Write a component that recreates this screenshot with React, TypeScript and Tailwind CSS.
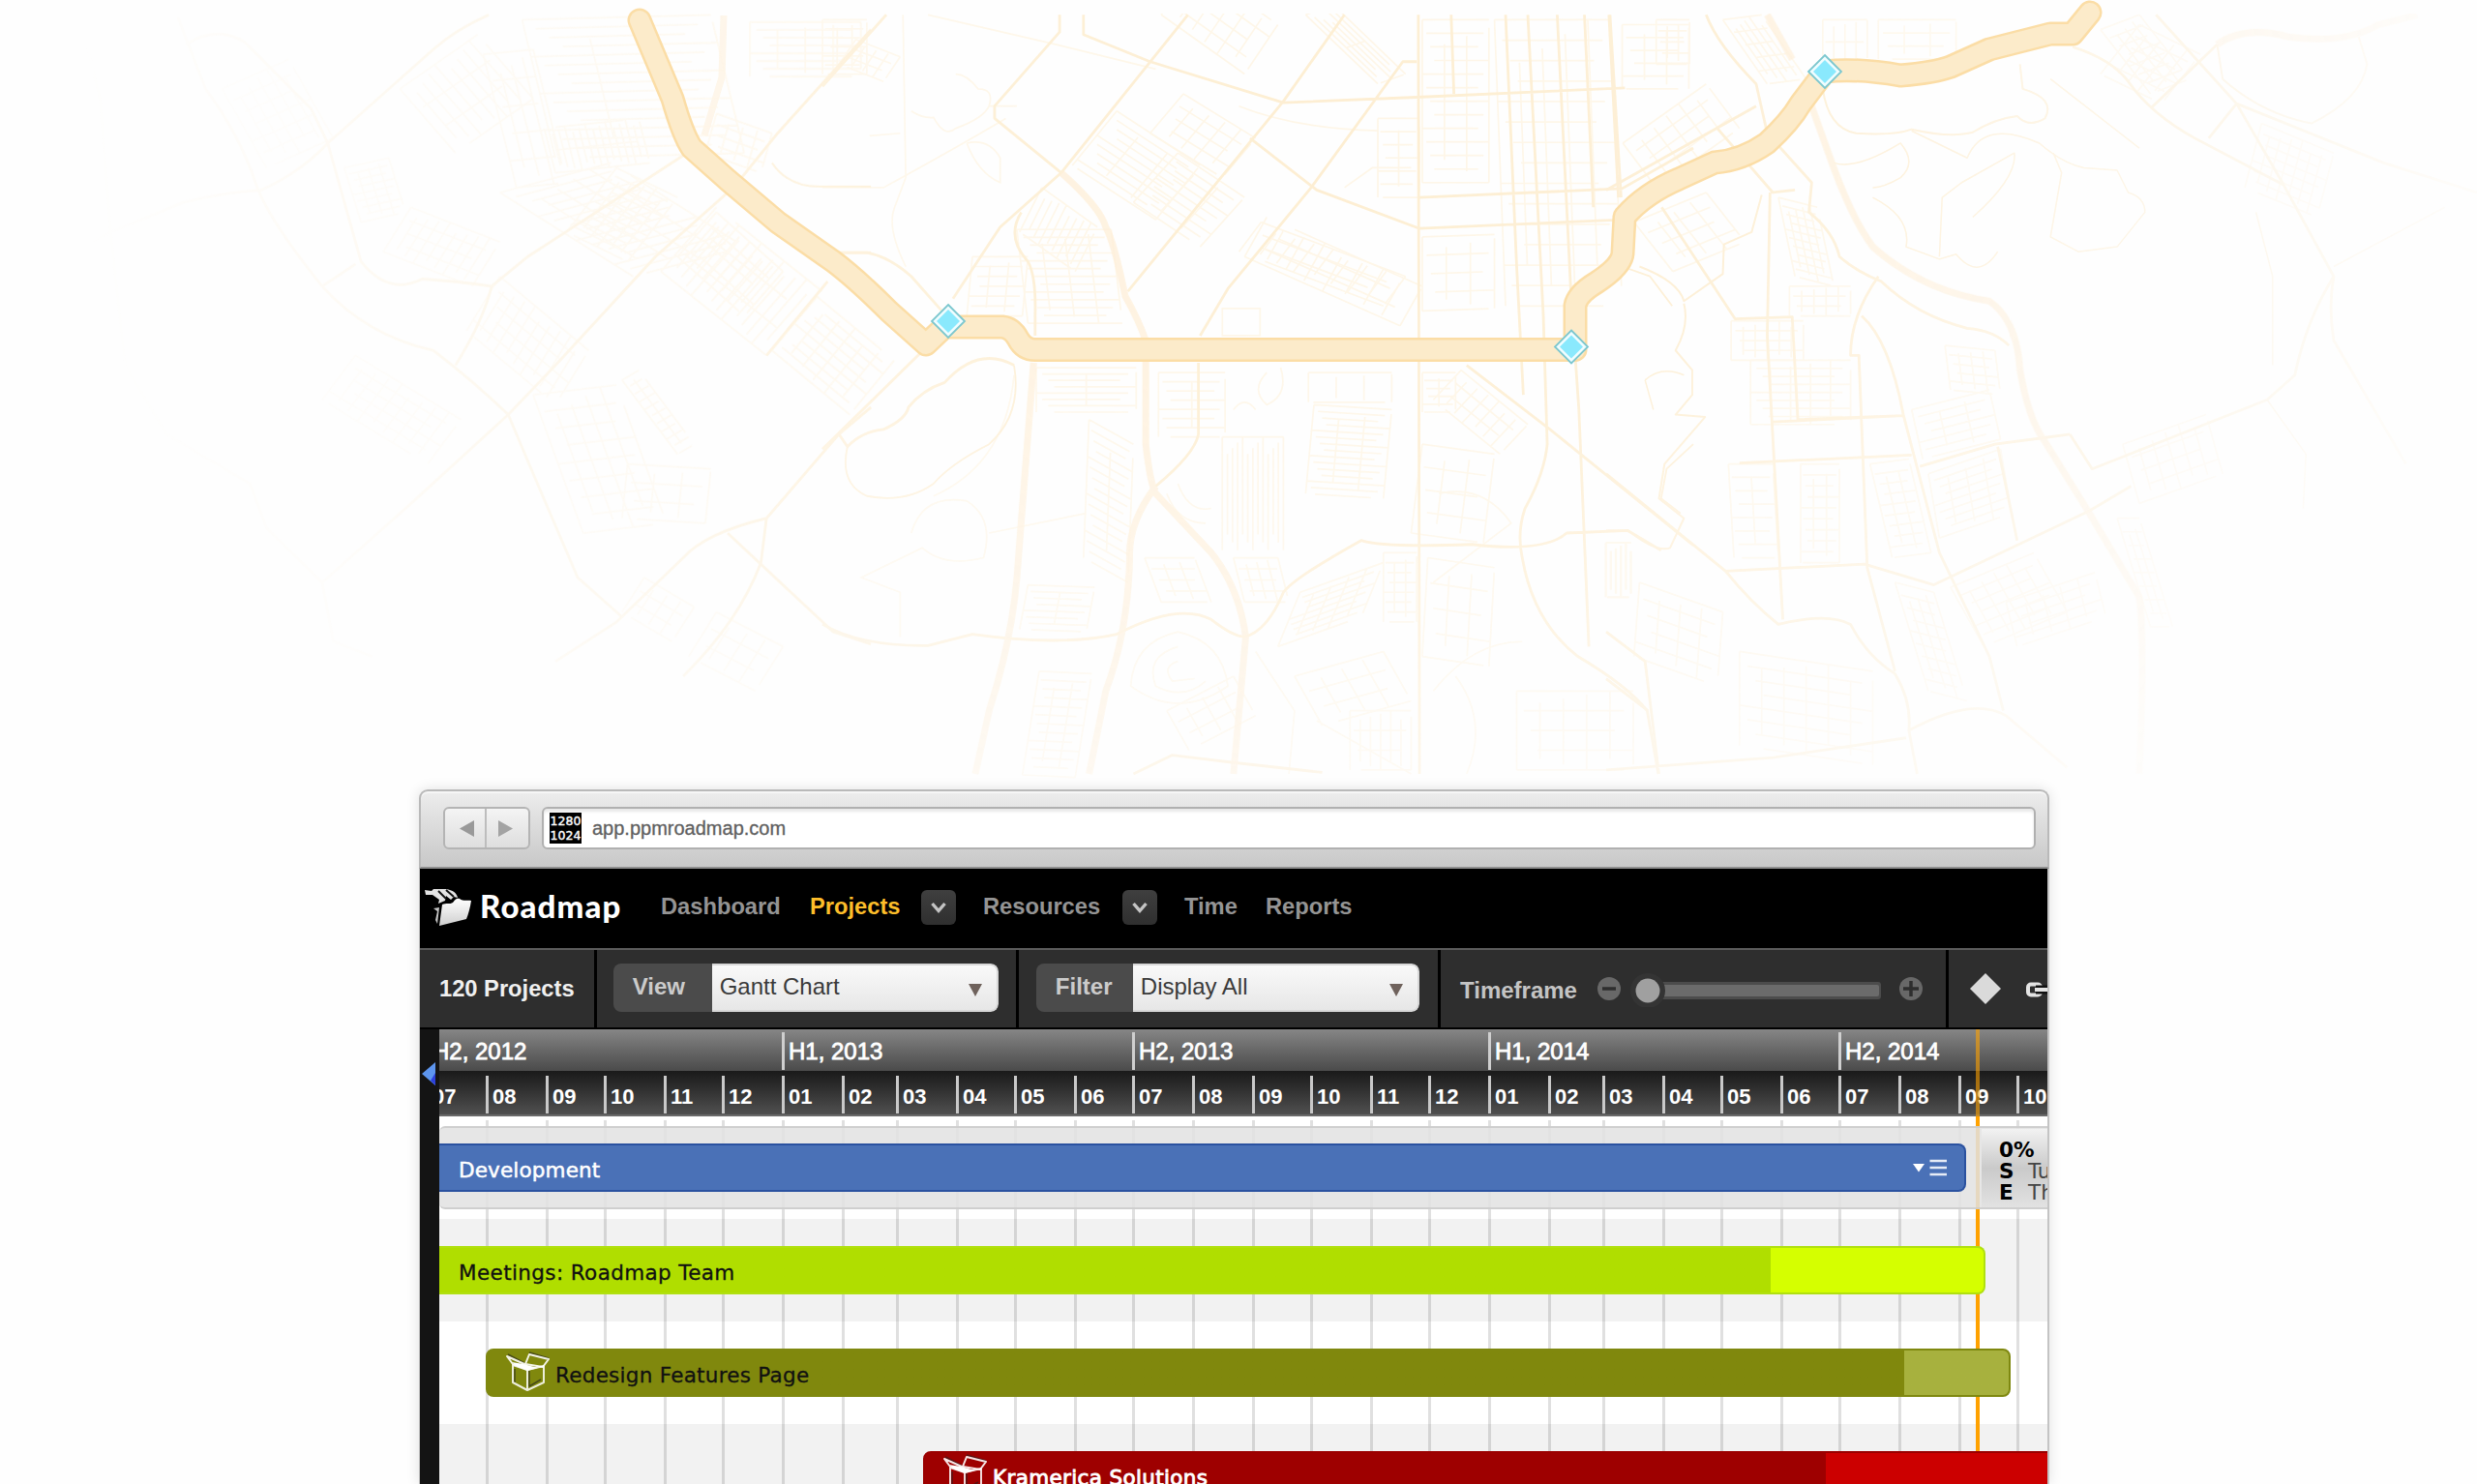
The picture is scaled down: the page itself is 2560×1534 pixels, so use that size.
import React from "react";

type Patch = [number, number, number, number, number, number, number, number];

// Builds a street grid inside the parallelogram spanned by u and v.
function streets([x, y, ux, uy, vx, vy, nu, nv]: Patch): string {
  let d = "";
  for (let i = 0; i <= nu; i++) {
    const t = nu ? i / nu : 0;
    const a = ((i * 7) % 4) * 0.05;
    const b = 1 - ((i * 5) % 3) * 0.07;
    d += `M${(x + ux * t + vx * a).toFixed(1)} ${(y + uy * t + vy * a).toFixed(1)}l${(vx * (b - a)).toFixed(1)} ${(vy * (b - a)).toFixed(1)}`;
  }
  for (let j = 0; j <= nv; j++) {
    const t = nv ? j / nv : 0;
    const a = ((j * 5) % 4) * 0.06;
    const b = 1 - ((j * 7) % 3) * 0.08;
    d += `M${(x + vx * t + ux * a).toFixed(1)} ${(y + vy * t + uy * a).toFixed(1)}l${(ux * (b - a)).toFixed(1)} ${(uy * (b - a)).toFixed(1)}`;
  }
  return d;
}

const westPatches: Patch[] = [
  [940, 40, 340, -10, 60, 280, 3, 15],
  [1350, 45, 200, 0, 0, 110, 4, 7],
  [720, 180, 140, -110, 100, 130, 9, 3],
  [870, 110, 90, -10, 60, 270, 4, 5],
  [1000, 350, 170, -20, -20, -90, 14, 2],
  [900, 390, 200, -60, 240, 170, 5, 14],
  [1110, 340, 110, 60, -90, 130, 6, 10],
  [1190, 550, 190, 170, 100, -130, 14, 3],
  [1290, 430, 120, 120, -70, 90, 8, 4],
  [1390, 710, 140, 130, 80, -110, 6, 8],
  [900, 560, 160, 150, -60, 110, 10, 5],
  [1290, 230, 100, 40, -20, 80, 4, 4],
  [400, 180, 120, -60, 80, 160, 6, 6],
  [620, 340, 80, -20, 30, 110, 4, 8],
  [740, 420, 160, 70, -50, 90, 9, 4],
  [640, 720, 190, 130, -60, 90, 9, 5],
  [960, 800, 150, -20, 90, 280, 5, 8],
  [1130, 940, 150, 10, -10, 110, 3, 3],
  [1120, 770, 100, 150, 30, -20, 10, 2],
  [1160, 1170, 90, 60, -40, 70, 4, 3],
  [1290, 1240, 120, 70, -50, 90, 4, 3],
];

const midPatches: Patch[] = [
  [0, 40, 80, 0, 0, 110, 3, 6],
  [60, 80, 80, 35, -30, 50, 4, 3],
  [530, 225, 150, 110, -80, 110, 3, 9],
  [640, 310, 120, 90, -80, 100, 3, 8],
  [610, 30, 150, 120, 60, -100, 6, 4],
  [650, 190, 130, 90, -60, 80, 5, 4],
  [870, 30, 130, 140, 50, -20, 2, 6],
  [790, 450, 260, 110, -40, 60, 8, 3],
  [760, 520, 280, 140, 40, -80, 8, 3],
  [395, 380, 100, 80, -40, 90, 9, 1],
  [350, 465, 170, 0, 20, 190, 4, 12],
  [270, 520, 100, 0, -10, 120, 3, 6],
  [1080, 40, 120, 0, 0, 330, 3, 12],
  [1210, 40, 210, 0, 20, 580, 5, 14],
  [1000, 240, 75, 0, 0, 160, 2, 6],
  [1440, 50, 120, 0, 0, 130, 3, 5],
  [1080, 480, 130, -5, 0, 150, 3, 4],
  [385, 745, 180, 0, 0, 90, 2, 7],
  [480, 850, 80, 50, -10, 280, 2, 15],
  [605, 755, 120, 0, 0, 130, 2, 7],
  [720, 885, 110, 0, 0, 230, 12, 0],
  [885, 820, 140, 10, -15, 180, 3, 14],
  [875, 755, 150, 0, 0, 60, 3, 1],
  [370, 1185, 120, 5, -15, 90, 2, 7],
  [390, 1360, 95, 5, -30, 210, 3, 12],
  [580, 1130, 90, 0, 30, 90, 3, 4],
  [740, 1130, 80, 0, 20, 90, 4, 4],
  [860, 1200, 150, -60, -40, 110, 5, 8],
  [1010, 1120, 60, 0, 0, 140, 3, 7],
  [1080, 755, 60, 0, 0, 80, 2, 5],
  [1150, 750, 120, 110, -50, 60, 7, 3],
  [850, 1370, 160, -50, 50, 100, 4, 3],
  [950, 1440, 110, 0, 0, 120, 6, 3],
  [1090, 1130, 120, 20, -10, 200, 3, 4],
  [1080, 900, 130, 20, -20, 180, 3, 4],
  [1410, 1100, 45, 0, 0, 110, 5, 1],
  [1250, 1400, 210, 0, 0, 160, 5, 4],
  [620, 1440, 120, -70, 40, 80, 4, 3],
];

const eastPatches: Patch[] = [
  [30, 290, 150, -120, 60, 90, 6, 4],
  [90, 40, 60, 0, 0, 90, 3, 4],
  [210, 40, 70, -10, 80, 130, 6, 5],
  [50, 450, 130, -60, 70, 100, 4, 4],
  [390, 40, 80, 0, 0, 90, 4, 2],
  [490, 40, 140, 0, 0, 80, 3, 3],
  [890, 60, 70, -30, 90, 130, 4, 7],
  [960, 50, 110, 60, -70, 100, 5, 5],
  [310, 400, 70, 20, 30, 160, 5, 10],
  [330, 580, 110, 0, 0, 60, 5, 3],
  [225, 650, 130, 0, 0, 80, 6, 4],
  [260, 730, 180, 0, 0, 130, 5, 8],
  [350, 940, 70, 0, 0, 200, 3, 9],
  [220, 940, 80, 0, 10, 190, 2, 7],
  [475, 940, 70, -10, 40, 190, 3, 9],
  [550, 830, 140, -40, 20, 100, 3, 6],
  [580, 960, 130, -50, 20, 130, 4, 8],
  [610, 700, 90, 10, 10, 90, 4, 5],
  [620, 1190, 150, -70, 60, 120, 6, 6],
  [520, 1180, 70, 20, 60, 220, 4, 9],
  [720, 1220, 160, -60, 20, 90, 5, 5],
  [240, 1320, 240, 40, 0, 190, 6, 7],
  [60, 1180, 150, 60, -10, 150, 4, 5],
  [930, 900, 150, -60, 30, 120, 6, 4],
  [1180, 250, 130, 60, -30, 130, 7, 7],
  [920, 1050, 40, 0, 60, 220, 3, 8],
  [0, 1100, 45, 0, 0, 110, 5, 1],
];

const ROUTE =
  "M661 21L695 102Q706 140 715 153L752 186L804 230L861 270Q885 288 919 322L957 356L976 338H1036Q1046 339 1052 350Q1058 361.500 1070 361.500H1628V316Q1630 304 1650 292Q1676 275 1677 262L1679 224Q1700 200 1735 185L1772 168Q1800 166 1826 148Q1850 126 1861 107L1886 74Q1918 70 1964 78Q2000 75 2016 69L2056 51L2119 35H2142L2160 13";

function RoadMap() {
  return (
    <svg className="absolute left-0 top-0 h-[820px] w-[2560px]" viewBox="0 0 2560 820" fill="none">
      <defs>
        <radialGradient id="fade" gradientUnits="userSpaceOnUse" cx="0" cy="0" r="1" gradientTransform="translate(1400 140) scale(1320 1020)">
          <stop offset="0" stopColor="#fff" />
          <stop offset="0.3" stopColor="#fff" stopOpacity="0.88" />
          <stop offset="0.62" stopColor="#fff" stopOpacity="0.48" />
          <stop offset="0.85" stopColor="#fff" stopOpacity="0.14" />
          <stop offset="1" stopColor="#fff" stopOpacity="0" />
        </radialGradient>
        <mask id="edge" maskUnits="userSpaceOnUse" x="0" y="0" width="2560" height="820">
          <rect x="0" y="14" width="2560" height="806" fill="url(#fade)" />
        </mask>
      </defs>
      <g mask="url(#edge)">
        <g stroke="#fef6e7" strokeWidth="1.700">
          <g transform="scale(0.574 0.5102)">
            {westPatches.map((p, i) => (
              <path key={i} d={streets(p)} vectorEffect="non-scaling-stroke" />
            ))}
          </g>
          <g transform="translate(850 0) scale(0.574 0.5102)">
            {midPatches.map((p, i) => (
              <path key={i} d={streets(p)} vectorEffect="non-scaling-stroke" />
            ))}
            <path vectorEffect="non-scaling-stroke" d="M145 30L150 360L130 420Q115 460 150 540M190 30L420 90L600 140M160 225Q180 240 200 238Q220 280 240 260Q290 240 300 215Q350 215 350 215M300 215Q310 180 280 180Q260 150 240 150M85 275L140 270M0 380H110Q240 300 330 240M260 290Q300 280 320 320V370Q280 350 260 290M720 625H788V680H720ZM800 755Q770 790 800 820Q840 800 825 745M740 830Q760 800 780 830M300 1080L475 1040M160 1080Q180 1000 260 1015Q310 1050 290 1130Q220 1150 180 1110L70 1170L140 1200V1290M640 1280Q560 1300 555 1390Q640 1460 730 1390Q720 1300 640 1280M640 1310Q580 1330 600 1390Q650 1420 690 1380M640 1340Q610 1350 630 1380L670 1375M620 1000Q640 1060 690 1060M640 980Q660 1040 700 1030M200 1005Q330 940 345 760M1110 1000Q1190 980 1240 1060L1100 1180M1100 1400Q1170 1300 1260 1300M1140 1370Q1200 1460 1160 1568M780 1320L850 1440L840 1568M890 1460L1060 1568M940 380L990 340H1060M750 215Q850 260 1000 265" />
          </g>
          <g transform="translate(1660 0) scale(0.574 0.5102)">
            {eastPatches.map((p, i) => (
              <path key={i} d={streets(p)} vectorEffect="non-scaling-stroke" />
            ))}
          </g>
        </g>
        <g stroke="#fdeed2" strokeWidth="2.800" strokeLinejoin="round">
          <g transform="scale(0.574 0.5102)">
            <path vectorEffect="non-scaling-stroke" d="M880 30Q820 60 780 100L590 290Q540 350 470 385Q400 390 330 410L200 470L90 530M320 35L370 180Q430 270 460 370Q480 440 580 580Q660 680 780 710Q850 770 915 840L960 960L1040 1170L1120 1250M335 90Q390 50 440 85L560 220L590 290L650 530Q700 600 760 565Q830 570 885 580L950 520L1230 315M885 580Q870 650 820 740M1310 390L1180 520L1000 740L915 840L740 1020L580 1180L600 1300L670 1330M580 580L640 535M1568 60L1400 270L1335 360M1500 512H1568M1568 825L1510 880L1380 1050Q1270 1080 1230 1130L1110 1260L1000 1340M1380 1050L1370 1140Q1330 1260 1230 1370M1310 1080L1500 1280L1568 1305M1490 570L1380 720M150 60L180 200L200 480L225 740L300 880L450 980L480 1070L580 1180" />
            <path strokeWidth="2" vectorEffect="non-scaling-stroke" d="M1390 330Q1420 380 1480 378H1568" />
          </g>
          <g transform="translate(850 0) scale(0.574 0.5102)">
            <path vectorEffect="non-scaling-stroke" d="M115 30L0 175M427 30V65L310 215V240L430 350M470 30V70L590 125L830 208L1070 197L1445 178M658 30L430 350L320 460L235 605M940 30L830 205L550 590M1070 125H1045L880 380L730 585L680 680M770 280L890 385L1075 463L1440 445M1075 400L1440 382L1568 300M1073 30L1075 1568M1132 30L1137 190M1230 30L1250 540L1262 800M1270 30L1298 640L1305 900Q1300 960 1265 1030Q1250 1080 1260 1130Q1280 1260 1360 1330Q1450 1390 1485 1440L1505 1568M1323 30L1348 600L1362 830L1380 1310M1372 30L1388 420M1418 30L1438 400M30 512H80Q120 520 160 560L215 630M358 430Q330 480 370 530Q385 560 383 640V680M30 880L45 905Q70 875 110 870Q150 850 155 825Q180 790 220 775Q280 700 345 740M0 910L190 700M0 1265Q70 1310 190 1308L270 1285Q430 1310 530 1285Q640 1220 700 1255Q740 1290 760 1290Q800 1280 830 1200Q850 1170 970 1095Q1010 1110 1170 1103Q1300 1120 1340 1080L1450 1075L1510 1115M1160 740L1310 870L1568 1105M677 735V880Q670 920 600 985M560 1568L630 1530L740 1545L900 1565" />
            <path strokeWidth="1.800" vectorEffect="non-scaling-stroke" d="M345 740Q360 840 300 900Q230 940 200 980Q150 1020 80 1005Q30 980 45 905M1440 540L1490 560L1530 620M1568 900L1520 950L1510 1010L1545 1040" />
          </g>
          <g transform="translate(1660 0) scale(0.574 0.5102)">
            <path vectorEffect="non-scaling-stroke" d="M5 30L22 400M180 30Q200 90 270 170L290 270L370 370L365 430Q410 470 420 520Q450 550 495 570Q560 640 650 665Q700 670 725 700M0 385L270 215M200 260L300 390L340 385M295 390L290 680L318 1255M100 420L232 646L335 642L345 850L535 842M490 560Q440 640 440 720L455 720L470 1150L520 1360M460 640Q510 690 535 840L600 1120L690 1330L715 1440M300 855L535 842M240 938L550 922M565 945L700 900L835 880M705 905L740 1095M215 1157L465 1143L590 1185L870 1035L945 985M0 960L215 1157Q260 1220 310 1265Q400 1240 440 1265Q470 1330 520 1365Q550 1420 545 1480L560 1568M0 1560L300 1535L540 1495M0 1280L70 1340L95 1568M0 1375L75 1440M840 95Q910 120 940 165Q980 230 1060 280L1220 375L1310 560Q1300 620 1310 690L1440 940M980 220L1100 90M990 30L1135 210L1085 280M1135 210L1400 330L1568 390M1135 210L1220 375M1310 560Q1260 650 1240 760L1190 810L875 950L835 880M545 1480Q660 1410 720 1450L830 1555" />
            <path strokeWidth="2" vectorEffect="non-scaling-stroke" d="M280 395L262 470L212 495L210 555L140 610Q130 570 60 540M140 615Q150 660 125 710L155 750V800L125 840L178 845L105 940L95 1010L140 1050L115 1110Q90 1120 40 1075L0 1075M390 180Q400 260 450 270Q520 275 550 262Q620 280 660 268Q700 240 740 235Q760 260 790 240Q810 200 750 180L745 130M1100 90L1110 160Q1180 230 1270 250Q1360 200 1370 130L1355 75" />
            <path strokeWidth="1.500" vectorEffect="non-scaling-stroke" d="M410 330Q450 345 530 290Q560 330 530 360Q500 380 480 380M550 265L650 320Q680 240 780 290Q820 330 860 340L920 345L940 390Q970 400 970 430L920 500L850 510L800 480L820 350L805 310M600 520L605 400L640 370L735 310Q740 360 660 440M480 400Q550 440 540 500L600 525L630 515Q670 570 705 510M800 160L960 300M1510 420L1310 540M1190 810L1260 920L1255 1030M1170 430L1200 560L1200 740M70 770Q100 740 140 760M70 770L85 830" />
          </g>
        </g>
        <g stroke="#feeed6" strokeWidth="7" strokeLinejoin="round" opacity="0.8">
          <g transform="translate(850 0) scale(0.574 0.5102)">
            <path vectorEffect="non-scaling-stroke" d="M430 350Q500 420 510 460Q525 490 545 600Q570 650 582 690V900Q590 980 600 1000L700 1120Q750 1190 762 1290L740 1568M600 985Q550 1060 553 1130Q550 1280 510 1400L480 1568M380 735L350 1170Q340 1300 300 1440L275 1568" />
          </g>
          <g transform="translate(1660 0) scale(0.574 0.5102)">
            <path vectorEffect="non-scaling-stroke" d="M365 200L400 310Q440 440 480 500Q570 590 690 610Q740 650 745 750Q760 850 790 895L870 1040L960 1210Q970 1300 960 1568M290 30L335 120M1100 90Q1150 50 1230 75Q1330 90 1390 50L1460 30" />
          </g>
          <path d="M748 16L746 80L728 140" />
        </g>
      </g>
      <g strokeLinecap="round" strokeLinejoin="round">
        <path stroke="#fbdda6" strokeWidth="25" d={ROUTE} />
        <path stroke="#fcebca" strokeWidth="20" d={ROUTE} />
      </g>
      {[
        [980, 332],
        [1624, 358.5],
        [1886, 74],
      ].map(([x, y]) => (
        <g key={x} transform={`translate(${x} ${y})`}>
          <path d="M0-17L17 0L0 17L-17 0Z" fill="#f0fdff" stroke="#7cc7cf" strokeWidth="1.800" />
          <path d="M0-12L12 0L0 12L-12 0Z" fill="#8ae9fd" />
        </g>
      ))}
    </svg>
  );
}

function BoxIcon() {
  return (
    <svg className="h-[44px] w-[46px] shrink-0" viewBox="0 0 46 44" fill="none" strokeLinejoin="round">
      <g stroke="#222" strokeOpacity=".6" strokeWidth="1.500">
        <path d="M2 3L19 12M24 1L44 7M9 18V32M24 20V36L36 29" />
      </g>
      <path d="M7 14L22 19L39 15V32L22 40L7 32ZM22 18V40" stroke="#fff" strokeWidth="2" strokeOpacity=".85" />
      <path d="M1 5L19 13L22 18L7 13ZM24 3L44 8L38 16L20 13Z" stroke="#fff" strokeWidth="2" strokeOpacity=".9" />
      <path d="M6 11L18 13L33 17L22 20L12 16Z" fill="#fff" />
    </svg>
  );
}

function MenuToggle() {
  return (
    <div className="flex h-[36px] w-[36px] items-center justify-center rounded-[6px] bg-linear-to-b from-[#3f3f3f] to-[#2f2f2f]">
      <svg className="h-[14px] w-[18px]" viewBox="0 0 18 14" fill="none">
        <path d="M2.500 3L9 10.500L15.500 3" stroke="#c4c4c4" strokeWidth="3.400" />
      </svg>
    </div>
  );
}

function Picker({ label, value, labelWidth }: { label: string; value: string; labelWidth: string }) {
  return (
    <div className="flex h-[50px] overflow-hidden rounded-[8px]">
      <div className={`${labelWidth} flex items-center bg-[#4b4b4b] pb-[2px] pl-[20px] text-[24px] font-bold text-[#cbcbcb]`}>{label}</div>
      <div className="flex w-[296px] items-center justify-between border-y-2 border-r-2 border-[#d8d8d8] rounded-r-[8px] bg-linear-to-b from-[#f9f9f9] to-[#e7e7e7] pl-[8px] pr-[15px]">
        <span className="pb-[2px] text-[24px] text-[#3a3a3a]">{value}</span>
        <svg className="mt-[5px] h-[13px] w-[14px]" viewBox="0 0 14 13">
          <path d="M0 0H14L7 13Z" fill="#6f625c" />
        </svg>
      </div>
    </div>
  );
}

const months: [string, number][] = [
  ["07", 62], ["08", 62], ["09", 60], ["10", 62], ["11", 60], ["12", 62],
  ["01", 62], ["02", 56], ["03", 62], ["04", 60], ["05", 62], ["06", 60],
  ["07", 62], ["08", 62], ["09", 60], ["10", 62], ["11", 60], ["12", 62],
  ["01", 62], ["02", 56], ["03", 62], ["04", 60], ["05", 62], ["06", 60],
  ["07", 62], ["08", 62], ["09", 60], ["10", 62],
];

const halves: [string, number][] = [
  ["H2, 2012", 368],
  ["H1, 2013", 362],
  ["H2, 2013", 368],
  ["H1, 2014", 362],
  ["H2, 2014", 368],
];

function Chrome() {
  return (
    <div className="flex h-[82px] rounded-t-[9px] border-x-2 border-t-2 border-b-2 border-[#b9b9b9] border-b-[#8f8f8f] bg-linear-to-b from-[#ededed] to-[#c8c8c8] pl-[23px] pt-[16px] shadow-[inset_0_2px_0_#f6f6f6]">
      <div className="flex h-[44px] w-[90px] rounded-[6px] border-2 border-[#b4b4b4] bg-linear-to-b from-[#f4f4f4] to-[#dedede]">
        <div className="flex w-[43px] items-center justify-end border-r-2 border-[#bdbdbd] pr-[11px]">
          <svg className="h-[17px] w-[15px]" viewBox="0 0 15 17"><path d="M15 0V17L0 8.500Z" fill="#999" /></svg>
        </div>
        <div className="flex flex-1 items-center pl-[12px]">
          <svg className="h-[17px] w-[15px]" viewBox="0 0 15 17"><path d="M0 0V17L15 8.500Z" fill="#a3a3a3" /></svg>
        </div>
      </div>
      <div className="ml-[12px] flex h-[44px] w-[1544px] items-center rounded-[6px] border-2 border-[#b0b0b0] bg-white pl-[6px] shadow-[inset_0_3px_3px_#e8e8e8]">
        <div className="flex h-[32px] w-[33px] flex-col items-center justify-center bg-black font-['DejaVu_Sans'] text-[12.500px] leading-[15.500px] text-white [-webkit-text-stroke:0.4px_white]">
          <span>1280</span>
          <span>1024</span>
        </div>
        <span className="ml-[11px] pb-px text-[20px] text-[#606060] [-webkit-text-stroke:0.3px_#606060]">app.ppmroadmap.com</span>
      </div>
    </div>
  );
}

function Nav() {
  return (
    <div className="flex h-[82px] items-center bg-black pb-[3px] pl-[5px] text-[23.700px] font-bold text-[#949494]">
      <svg className="h-[40px] w-[50px]" viewBox="0 0 50 40">
        <defs>
          <linearGradient id="folder" x1="0" y1="0" x2="0" y2="1">
            <stop offset="0" stopColor="#fff" />
            <stop offset="1" stopColor="#cfcfcf" />
          </linearGradient>
        </defs>
        <path d="M0 2L7 3L9 1H22C29 2 33 5 34 10L30 9L27 12L22 8L21 13L14 16L15 12L8 7L1 7Z" fill="#e4e4e4" />
        <path d="M14 3L22 11M22 2L30 9" stroke="#111" strokeWidth="2" />
        <path d="M9 21L15 20L13 37L11 33L13 24Z" fill="#c4c4c4" />
        <path d="M18 17C22 15 26 17 29 15C31 13 32 10 36 11C40 14 44 12 48 13C47 20 45 27 43 32L15 39Z" fill="url(#folder)" />
      </svg>
      <span className="ml-[7px] w-[187px] pb-[2px] font-['Lato'] text-[33px] font-black leading-none tracking-[1.1px] text-white">Roadmap</span>
      <span className="w-[154px] pt-px">Dashboard</span>
      <span className="w-[115px] pt-px text-[#fdbe2a]">Projects</span>
      <MenuToggle />
      <span className="ml-[28px] w-[144px] pt-px">Resources</span>
      <MenuToggle />
      <span className="ml-[28px] w-[84px] pt-px">Time</span>
      <span className="pt-px">Reports</span>
    </div>
  );
}

function Toolbar() {
  return (
    <div className="flex h-[84px] border-b-2 border-t-2 border-b-black border-t-[#5b5b5b] bg-[#2e2e2e]">
      <div className="flex w-[183px] items-center border-r-[3px] border-black pl-[20px] pt-[2px] text-[23.700px] font-bold text-[#f0f0f0]">120 Projects</div>
      <div className="flex w-[437px] items-center border-r-[3px] border-black pb-[2px] pl-[17px]">
        <Picker label="View" value="Gantt Chart" labelWidth="w-[102px]" />
      </div>
      <div className="flex w-[437px] items-center border-r-[3px] border-black pb-[2px] pl-[18px]">
        <Picker label="Filter" value="Display All" labelWidth="w-[100px]" />
      </div>
      <div className="flex w-[526px] items-center border-r-[3px] border-black pl-[20px] pt-[2px]">
        <span className="w-[142px] pt-[2px] text-[24px] font-bold text-[#c4c4c4]">Timeframe</span>
        <svg className="h-[36px] w-[340px]" viewBox="0 0 340 36">
          <circle cx="12" cy="17" r="12" fill="#686868" />
          <path d="M5 17H19" stroke="#2e2e2e" strokeWidth="3.500" />
          <rect x="46" y="10" width="247" height="18" rx="3" fill="#4c4c4c" />
          <rect x="46" y="13" width="245" height="12" rx="2" fill="#6b6b6b" />
          <circle cx="52" cy="19" r="18" fill="#343434" />
          <circle cx="52" cy="19" r="12.500" fill="#a0a0a0" />
          <circle cx="324" cy="17" r="12" fill="#686868" />
          <path d="M316 17H332M324 9V25" stroke="#2e2e2e" strokeWidth="3.500" />
        </svg>
      </div>
      <div className="flex items-center pl-[22px]">
        <svg className="h-[34px] w-[80px]" viewBox="0 0 80 34">
          <path d="M16 1L32 17L16 33L0 17Z" fill="#dadada" />
          <rect x="60" y="12.500" width="13" height="11" rx="3" fill="none" stroke="#e4e4e4" strokeWidth="4" />
          <path d="M68 18H80" stroke="#111" strokeWidth="9" />
          <path d="M67 18H80" stroke="#e4e4e4" strokeWidth="4" />
        </svg>
      </div>
    </div>
  );
}

function Timeline() {
  return (
    <div className="h-[90px] overflow-hidden">
      <div className="flex h-[43px] w-[1900px] bg-linear-to-b from-[#868686] to-[#4b4b4b] pt-[3px]">
        <div className="-ml-[14px] flex">
          {halves.map(([name, w]) => (
            <div key={name} style={{ width: w }} className="flex h-[39px] items-center border-l-[3px] border-[#cfcfcf] pl-[4px] text-[24px] text-white [-webkit-text-stroke:0.8px_white]">{name}</div>
          ))}
        </div>
      </div>
      <div className="flex h-[47px] w-[1900px] border-b-2 border-[#6a6a6a] bg-linear-to-b from-[#1a1a1a] to-[#505050] pt-[5px]">
        <div className="-ml-[14px] flex">
          {months.map(([name, w], i) => (
            <div key={i} style={{ width: w }} className="flex h-[39px] items-center border-l-[3px] border-[#c9c9c9] pl-[4px] pt-[4px] text-[22px] font-bold text-white">{name}</div>
          ))}
        </div>
      </div>
    </div>
  );
}

function GridLines() {
  return (
    <div className="absolute inset-x-0 bottom-0 top-[4px] overflow-hidden">
      <div className="-ml-[14px] flex h-full w-[1900px]">
        {months.map(([, w], i) => (
          <div key={i} style={{ width: w }} className="h-full shrink-0 border-l-[3px] border-black/12" />
        ))}
      </div>
    </div>
  );
}

export default function App() {
  return (
    <div className="relative h-[1534px] w-[2560px] overflow-hidden bg-[#fefefe] pl-[433px] pt-[816px] font-['Liberation_Sans',sans-serif] whitespace-nowrap">
      <RoadMap />
      <div className="relative w-[1685px] rounded-t-[9px] shadow-[0_0_14px_rgba(0,0,0,0.12)]">
        <Chrome />
        <div className="w-[1685px] overflow-hidden border-l border-r-2 border-[#c4c4c4]">
          <Nav />
          <Toolbar />
          <div className="flex h-[470px]">
            <div className="w-[20px] shrink-0 bg-[#141414] pl-[2px] pt-[33px]">
              <svg className="h-[26px] w-[15px]" viewBox="0 0 15 26">
                <path d="M14 1V25L0 13Z" fill="#5d95ee" />
                <path d="M14 25L9 20L14 12Z" fill="#2c40dc" />
              </svg>
            </div>
            <div className="relative flex w-[1663px] flex-col">
              <Timeline />
              <div className="relative h-[380px] overflow-hidden bg-white font-['DejaVu_Sans',sans-serif] text-[21.500px]">
                <div className="absolute inset-x-0 top-[106px] h-[106px] bg-[#f2f2f2]" />
                <div className="absolute inset-x-0 top-[318px] h-[80px] bg-[#f2f2f2]" />
                <GridLines />
                <div className="absolute -top-[90px] left-[1588px] h-[470px] w-[4px] bg-[#ffa200]" />
                <div className="relative mt-[10px] flex h-[86px] rounded-l-[6px] border-y-2 border-[#c9c9c9]/80 bg-[#e2e2e2]/85 pt-[16px]">
                  <div className="flex h-[50px] w-[1578px] shrink-0 items-center justify-between rounded-r-[8px] border-y-[2px] border-r-[2px] border-[#2b52a0] bg-[#4a71b7] pl-[20px] pr-[18px] text-white">
                    <span className="pt-[6px] tracking-[0.15px] [-webkit-text-stroke:0.5px_white]">Development</span>
                    <svg className="h-[18px] w-[36px]" viewBox="0 0 36 18">
                      <path d="M1 5H13L7 13.500Z" fill="#fff" />
                      <path d="M18.500 2H36M18.500 9H36M18.500 16H36" stroke="#e6ecf6" strokeWidth="2.500" />
                    </svg>
                  </div>
                  <div className="-mt-[15px] ml-[16px] h-[81px] w-[80px] shrink-0 bg-linear-to-b from-[#f2f2f2] from-0% via-[#cacaca] via-50% to-[#e2e2e2] pl-[18px] pt-[11px] text-[21.500px] leading-[22px] text-black">
                    <div className="font-bold">0%</div>
                    <div className="flex"><b className="w-[30px]">S</b><span className="text-[#444]">Tu</span></div>
                    <div className="flex"><b className="w-[30px]">E</b><span className="text-[#444]">Th</span></div>
                  </div>
                </div>
                <div className="relative mt-[38px] flex h-[50px] w-[1598px] items-center overflow-hidden rounded-r-[8px] border-y-2 border-r-2 border-[#b0e010] bg-linear-to-r from-[#b0de00] from-[1376px] to-[#d5ff00] to-[1376px] pl-[20px] pt-[6px] tracking-[0.38px] text-[#111] [-webkit-text-stroke:0.3px_#111]">Meetings: Roadmap Team</div>
                <div className="relative ml-[48px] mt-[56px] flex h-[50px] w-[1576px] items-center rounded-[8px] border-2 border-[#7f8810] bg-linear-to-r from-[#80880d] from-[1464px] to-[#a7b13e] to-[1464px] pl-[19px] text-[#111]">
                  <BoxIcon />
                  <span className="ml-[5px] pt-[6px] tracking-[0.26px] [-webkit-text-stroke:0.3px_#111]">Redesign Features Page</span>
                </div>
                <div className="relative ml-[500px] mt-[56px] flex h-[50px] w-[1200px] items-center rounded-l-[8px] border-2 border-[#9a0000] bg-linear-to-r from-[#9e0000] from-[931px] to-[#cc0000] to-[931px] pl-[19px] text-white">
                  <BoxIcon />
                  <span className="ml-[5px] pt-[7px] tracking-[0.35px] [-webkit-text-stroke:0.9px_white]">Kramerica Solutions</span>
                </div>
              </div>
              <div className="absolute left-[1588px] top-0 h-[90px] w-[4px] bg-[#ffa200]/60" />
            </div>
          </div>
        </div>
      </div>
    </div>
  );
}
